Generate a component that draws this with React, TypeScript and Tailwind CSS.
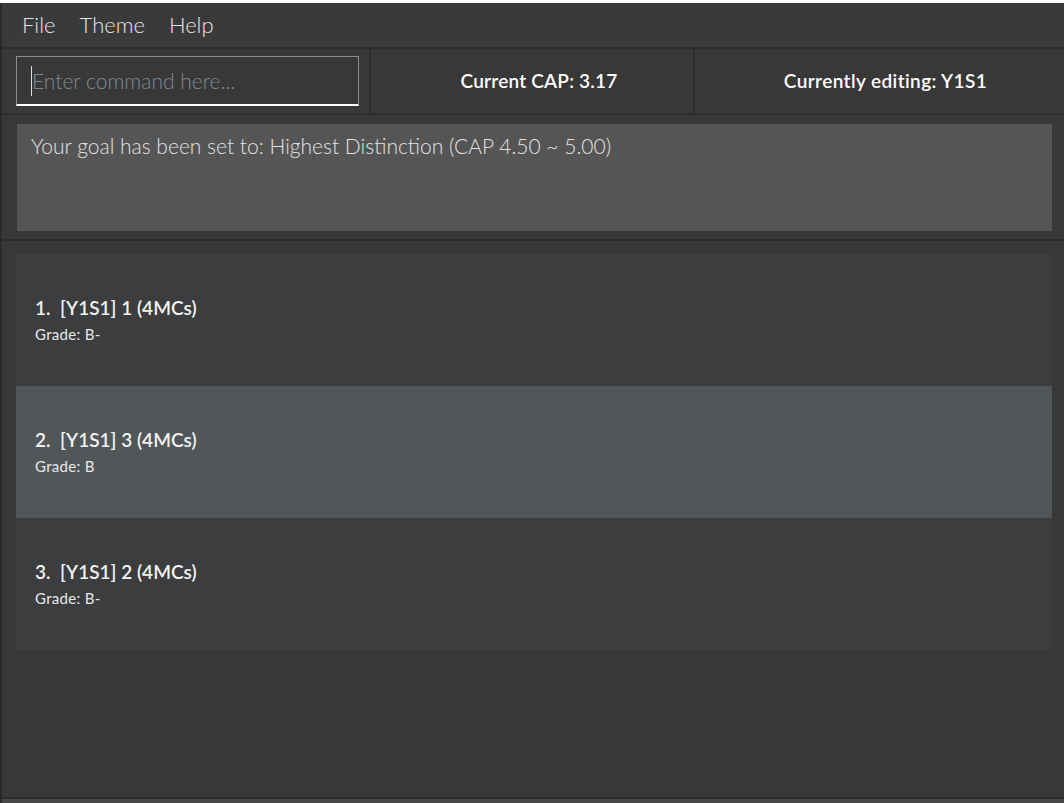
import React from 'react';

const modules = [
  { idx: 1, title: '[Y1S1] 1 (4MCs)', grade: 'B-' },
  { idx: 2, title: '[Y1S1] 3 (4MCs)', grade: 'B' },
  { idx: 3, title: '[Y1S1] 2 (4MCs)', grade: 'B-' },
];

const font = { fontFamily: '"Segoe UI", Lato, "Open Sans", sans-serif' };

export default function App() {
  const selected = 2;

  return (
    <div className="w-[1064px] h-[803px] flex flex-col bg-white overflow-hidden" style={font}>
      <div className="h-[3px] bg-white" />
      <div className="flex-1 flex flex-col border-l-2 border-[#2a2a2a] bg-[#383838]">
        {/* menu bar */}
        <div className="h-[46px] flex items-center gap-[24px] px-[20px] pb-[2px] bg-[#3a3a3a] text-[22px] font-light text-[#e6e6e6] border-b-2 border-[#2e2e2e]">
          <span>File</span>
          <span>Theme</span>
          <span>Help</span>
        </div>

        {/* command row */}
        <div className="h-[66px] flex border-b-2 border-[#2e2e2e]">
          <div className="w-[369px] flex items-center pl-[14px] border-r-2 border-[#2e2e2e]">
            <div className="w-[343px] h-[50px] flex items-center pl-[14px] border border-[#8c8c8c] border-b-2 border-b-white bg-[#383838]">
              <span className="w-px h-[30px] bg-[#dcdcdc]" />
              <span className="text-[21px] font-light text-[#7d8a94]">Enter command here...</span>
            </div>
          </div>
          <div className="w-[324px] flex items-center justify-center pl-[14px] border-r-2 border-[#2e2e2e] text-[19px] font-semibold text-white tracking-[0.2px]">
            Current CAP: 3.17
          </div>
          <div className="flex-1 flex items-center justify-center pl-[12px] text-[19px] font-semibold text-white tracking-[0.4px]">
            Currently editing: Y1S1
          </div>
        </div>

        {/* result display */}
        <div className="h-[126px] pl-[15px] pr-[12px] pt-[9px] pb-[8px] border-b-2 border-[#2c2c2c]">
          <div className="h-full bg-[#555555] px-[14px] pt-[6px] text-[21px] font-light text-[#e2e2e2]">
            Your goal has been set to: Highest Distinction (CAP 4.50 ~ 5.00)
          </div>
        </div>

        {/* module list */}
        <div className="flex-1 pl-[14px] pr-[12px] pt-[13px] border-b-2 border-[#2c2c2c]">
          {modules.map((m) => (
            <div
              key={m.idx}
              className={`h-[132px] flex flex-col justify-center pl-[19px] ${
                m.idx === selected ? 'bg-[#515658]' : 'bg-[#3c3d3f]'
              }`}
            >
              <div className="text-[19px] font-semibold text-[#f2f2f2] leading-[24px] whitespace-pre">
                {m.idx}.{'  '}{m.title}
              </div>
              <div className="text-[15px] text-[#e8e8e8] leading-[20px] mt-[4px] tracking-[0.3px]">Grade: {m.grade}</div>
            </div>
          ))}
        </div>
        <div className="h-[4px] bg-[#474747]" />
      </div>
    </div>
  );
}
